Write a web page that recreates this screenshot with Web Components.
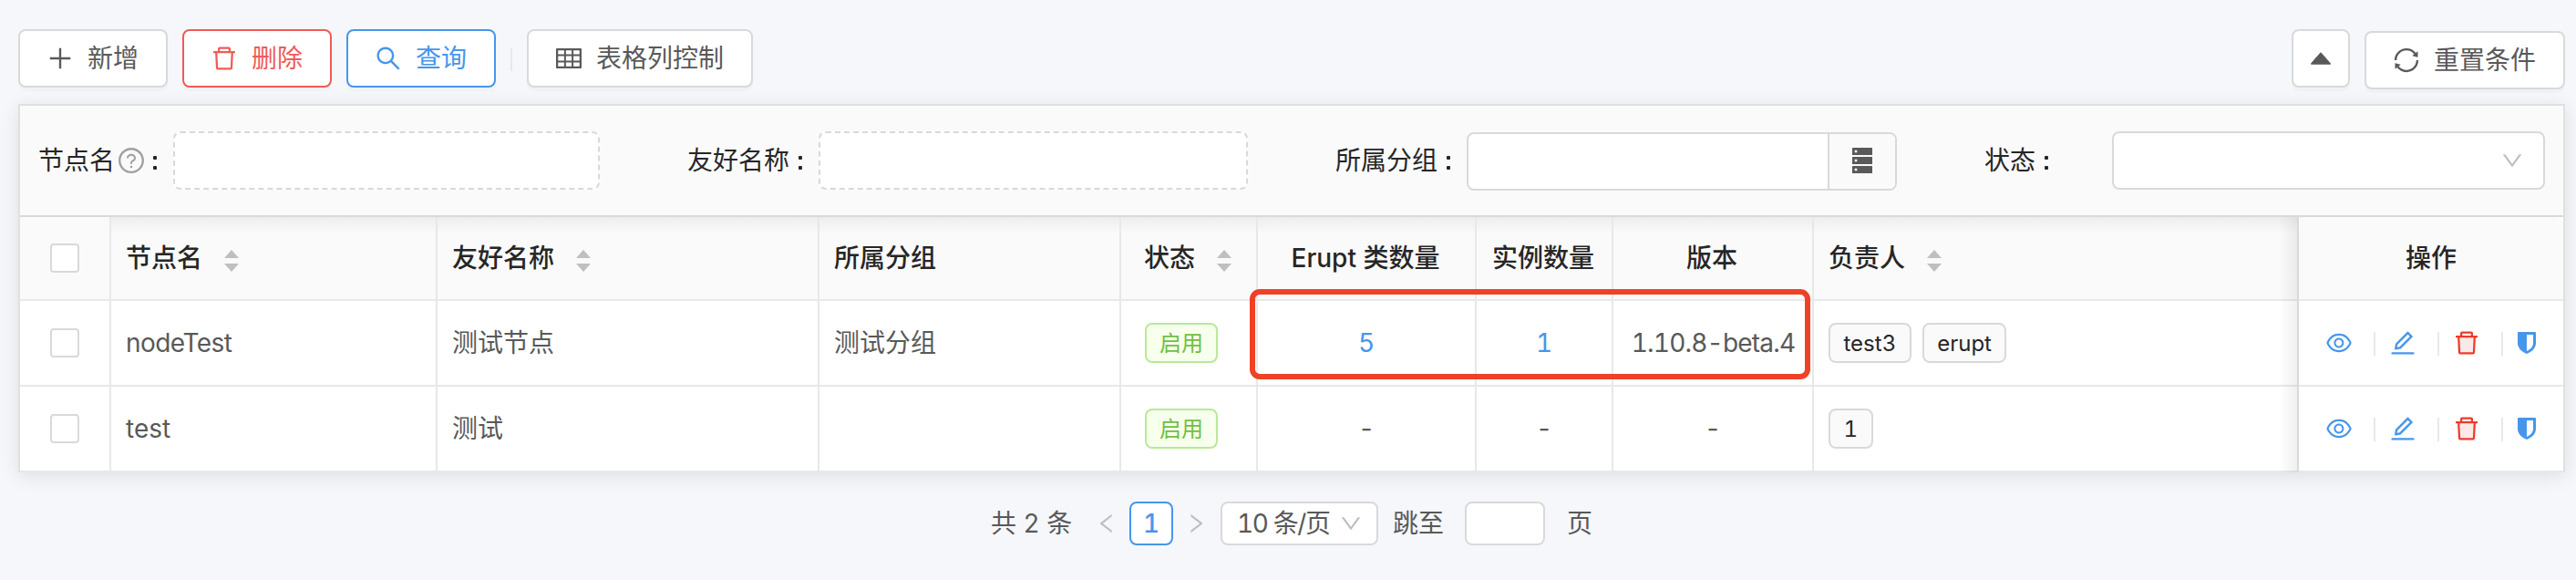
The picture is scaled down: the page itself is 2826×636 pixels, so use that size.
<!DOCTYPE html>
<html lang="zh-CN">
<head>
<meta charset="utf-8">
<title>Erupt 节点管理</title>
<style>
  html, body { margin: 0; height: 100%; }
  body {
    background: #f5f7fb;
    color: #595959;
    font: 28px/44px Inter, "Noto Sans CJK SC", sans-serif;
    font-variant-numeric: tabular-nums;
    overflow: hidden;
  }
</style>
</head>
<body>
<node-page></node-page>
<script>
const ICONS = {
  plus: '<path d="M482 152h60q8 0 8 8v704q0 8-8 8h-60q-8 0-8-8V160q0-8 8-8Z"/><path d="M192 474h672q8 0 8 8v60q0 8-8 8H160q-8 0-8-8v-60q0-8 8-8Z"/>',
  trash: '<path d="M360 184h-8c4.400 0 8-3.600 8-8v8h304v-8c0 4.400 3.600 8 8 8h-8v72h72v-80c0-35.300-28.700-64-64-64H352c-35.300 0-64 28.700-64 64v80h72v-72zm504 72H160c-17.700 0-32 14.300-32 32v32c0 4.400 3.600 8 8 8h60.400l24.700 523c1.600 34.100 29.800 61 63.900 61h454c34.200 0 62.300-26.800 63.900-61l24.700-523H888c4.400 0 8-3.600 8-8v-32c0-17.700-14.300-32-32-32zM731.300 840H292.700l-24.200-512h487l-24.200 512z"/>',
  trash2: '<path fill="#fbe9e7" d="M292.700 840h438.600l24.200-512h-487z"/><path d="M864 256H736v-80c0-35.300-28.700-64-64-64H352c-35.300 0-64 28.700-64 64v80H160c-17.700 0-32 14.300-32 32v32c0 4.400 3.600 8 8 8h60.400l24.700 523c1.600 34.100 29.800 61 63.900 61h454c34.200 0 62.300-26.800 63.900-61l24.700-523H888c4.400 0 8-3.600 8-8v-32c0-17.700-14.300-32-32-32zm-504-72h304v72H360v-72zm371.300 656H292.700l-24.200-512h487l-24.200 512z"/>',
  search: '<path d="M909.600 854.500L649.900 594.800C690.200 542.700 712 479 712 412c0-80.200-31.300-155.400-87.900-212.100-56.600-56.700-132-87.900-212.100-87.900s-155.500 31.300-212.100 87.900C143.200 256.500 112 331.800 112 412c0 80.100 31.300 155.500 87.900 212.100C256.500 680.800 331.800 712 412 712c67 0 130.600-21.800 182.700-62l259.700 259.600a8.200 8.200 0 0 0 11.600 0l43.600-43.500a8.200 8.200 0 0 0 0-11.600zM570.400 570.400C528 612.700 471.800 636 412 636s-116-23.300-158.400-65.600C211.300 528 188 471.800 188 412s23.300-116.100 65.600-158.400C296 211.300 352.200 188 412 188s116.100 23.200 158.400 65.600S636 352.200 636 412s-23.300 116.100-65.600 158.400z"/>',
  table: '<path d="M928 160H96c-17.700 0-32 14.300-32 32v640c0 17.700 14.300 32 32 32h832c17.700 0 32-14.300 32-32V192c0-17.700-14.300-32-32-32zm-40 208H676V232h212v136zm0 224H676V432h212v160zM412 432h200v160H412V432zm200-64H412V232h200v136zm-476 64h212v160H136V432zm0-200h212v136H136V232zm0 424h212v136H136V656zm276 0h200v136H412V656zm476 136H676V656h212v136z"/>',
  caretUp: '<path d="M858.900 689L530.500 308.200c-9.400-10.900-27.500-10.900-37 0L165.100 689c-12.200 14.200-1.200 35 18.500 35h656.800c19.700 0 30.700-20.800 18.500-35z"/>',
  sync: '<path d="M168 504.200c1-43.700 10-86.100 26.900-126 17.300-41 42.100-77.700 73.700-109.400S337 212.300 378 195c42.400-17.900 87.400-27 133.900-27s91.500 9.100 133.800 27A341.500 341.500 0 0 1 755 268.800c9.900 9.900 19.200 20.400 27.800 31.400l-60.200 47a8 8 0 0 0 3 14.100l175.700 43c5 1.200 9.900-2.600 9.900-7.700l.8-180.900c0-6.700-7.700-10.500-12.900-6.300l-56.400 44.100C765.800 155.100 646.200 92 511.800 92 282.700 92 96.300 275.600 92 503.800a8 8 0 0 0 8 8.200h60c4.400 0 7.900-3.500 8-7.800zm756 7.800h-60c-4.400 0-7.900 3.500-8 7.800-1 43.700-10 86.100-26.900 126-17.300 41-42.100 77.800-73.700 109.400A342.450 342.450 0 0 1 512.100 856a342.240 342.240 0 0 1-243.200-100.800c-9.900-9.900-19.200-20.400-27.800-31.400l60.200-47a8 8 0 0 0-3-14.100l-175.700-43c-5-1.200-9.900 2.600-9.900 7.700l-.7 181c0 6.700 7.700 10.500 12.900 6.300l56.400-44.100C258.200 868.900 377.800 932 512.200 932c229.200 0 415.500-183.700 419.800-411.800a8 8 0 0 0-8-8.200z"/>',
  help: '<path d="M512 64C264.600 64 64 264.600 64 512s200.600 448 448 448 448-200.600 448-448S759.400 64 512 64zm0 820c-205.400 0-372-166.600-372-372s166.600-372 372-372 372 166.600 372 372-166.600 372-372 372z"/><path d="M623.600 316.700C593.600 290.400 554 276 512 276s-81.600 14.500-111.600 40.700C369.200 344 352 380.700 352 420v7.600c0 4.400 3.600 8 8 8h48c4.400 0 8-3.600 8-8V420c0-44.100 43.100-80 96-80s96 35.900 96 80c0 31.100-22 59.600-56.100 72.700-21.200 8.100-39.200 22.300-52.100 40.900-13.100 19-19.900 41.800-19.900 64.900V620c0 4.400 3.600 8 8 8h48c4.400 0 8-3.600 8-8v-22.700a48.300 48.300 0 0 1 30.900-44.800c59-22.700 97.100-74.700 97.100-132.500.1-39.300-17.100-76-48.300-103.300zM472 732a40 40 0 1 0 80 0 40 40 0 1 0-80 0z"/>',
  down: '<path d="M884 256h-75c-5.100 0-9.900 2.500-12.900 6.600L512 654.200 227.900 262.600c-3-4.100-7.800-6.600-12.900-6.600h-75c-6.500 0-10.300 7.400-6.500 12.700l352.600 486.100c12.800 17.600 39 17.600 51.700 0l352.600-486.100c3.900-5.300.1-12.700-6.400-12.700z"/>',
  left: '<path d="M724 218.300V141c0-6.700-7.700-10.400-12.900-6.300L260.300 486.800a31.860 31.860 0 0 0 0 50.300l450.800 352.100c5.300 4.100 12.900.4 12.900-6.300v-77.300c0-4.900-2.300-9.600-6.100-12.600l-360-281 360-281.100c3.800-3 6.100-7.700 6.100-12.600z"/>',
  right: '<path d="M765.700 486.800L314.900 134.700A7.970 7.970 0 0 0 302 141v77.300c0 4.900 2.300 9.600 6.100 12.600l360 281.100-360 281.100c-3.900 3-6.100 7.700-6.100 12.600V883c0 6.700 7.700 10.400 12.900 6.300l450.800-352.100a31.960 31.960 0 0 0 0-50.400z"/>',
  eye: '<path d="M942.200 486.200C847.400 286.500 704.100 186 512 186c-192.200 0-335.400 100.500-430.200 300.300a60.300 60.300 0 0 0 0 51.500C176.600 737.500 319.900 838 512 838c192.200 0 335.400-100.500 430.200-300.300 7.700-16.200 7.700-35 0-51.500zM512 766c-161.300 0-279.400-81.800-362.700-254C232.600 339.800 350.700 258 512 258c161.300 0 279.400 81.800 362.700 254C791.500 684.200 673.400 766 512 766zm-4-430c-97.200 0-176 78.800-176 176s78.800 176 176 176 176-78.800 176-176-78.800-176-176-176zm0 288c-61.900 0-112-50.100-112-112s50.100-112 112-112 112 50.100 112 112-50.100 112-112 112z"/>',
  edit: '<path d="M257.700 752c2 0 4-.2 6-.5L431.900 722c2-.4 3.900-1.300 5.300-2.800l423.900-423.900a9.960 9.960 0 0 0 0-14.100L694.900 114.900c-1.900-1.900-4.400-2.900-7.100-2.900s-5.200 1-7.100 2.900L256.800 538.800c-1.500 1.500-2.400 3.300-2.800 5.300l-29.500 168.200a33.500 33.500 0 0 0 9.400 29.800c6.600 6.400 14.900 9.900 23.800 9.900zm67.400-174.400L687.800 215l73.300 73.300-362.700 362.600-88.900 15.700 15.600-89zM880 836H144c-17.700 0-32 14.300-32 32v36c0 4.400 3.600 8 8 8h784c4.400 0 8-3.600 8-8v-36c0-17.700-14.300-32-32-32z"/>'
};

// Registers an element whose shadow root is cloned from a template.
function define(name, render) {
  customElements.define(name, class extends HTMLElement {
    connectedCallback() {
      if (this.shadowRoot) return;
      const t = document.createElement('template');
      t.innerHTML = typeof render === 'function' ? render(this) : render;
      this.attachShadow({ mode: 'open' }).append(t.content.cloneNode(true));
    }
  });
}

define('ui-icon', el => `
  <style>
    :host { display: block; flex: none; width: var(--size, 28px); height: var(--size, 28px); }
    svg { display: block; width: 100%; height: 100%; fill: currentColor; }
  </style>
  <svg viewBox="64 64 896 896">${ICONS[el.getAttribute('name')]}</svg>`);

define('shield-icon', `
  <style>:host { display: block; width: 20px; height: 24px; } svg { display: block; }</style>
  <svg width="20" height="24" viewBox="0 0 20 24"><path fill="currentColor" fill-rule="evenodd" d="M1 0h18q1 0 1 1v11c0 6-4.500 9.800-10 12C4.500 21.800 0 18 0 12V1q0-1 1-1Zm9 3v18c4-2 7-4.800 7-9V3Z"/></svg>`);

define('server-icon', `
  <style>:host { display: block; width: 22px; height: 28px; } svg { display: block; }</style>
  <svg width="22" height="28" viewBox="0 0 22 28"><path fill="#595959" fill-rule="evenodd" d="M.5 0h21q.5 0 .5.500v7q0 .5-.5.500H.5Q0 8 0 7.500v-7Q0 0 .5 0ZM2.700 2.700v2.600h2.600V2.700ZM.5 10h21q.5 0 .5.500v7q0 .5-.5.500H.5q-.5 0-.5-.5v-7q0-.5.500-.5Zm2.200 2.700v2.600h2.600v-2.600ZM.5 20h21q.5 0 .5.500v7q0 .5-.5.500H.5q-.5 0-.5-.5v-7q0-.5.500-.5Zm2.200 2.700v2.600h2.600v-2.600Z"/></svg>`);

define('ui-button', el => `
  <style>
    :host { display: flex; box-sizing: border-box; height: 64px; padding: 0 30px; gap: 16px;
      align-items: center; justify-content: center; border: 2px solid #d9d9d9; border-radius: 8px;
      background: #fff; box-shadow: 0 4px 0 rgba(0,0,0,.02); white-space: nowrap; }
    :host([danger]) { border-color: #f05b56; color: #f05b56; }
    :host([primary]) { border-color: #4696ec; color: #4696ec; }
    :host([wide]) { margin-top: 2px; }
    :host([square]) { width: 64px; padding: 0; margin-right: 16px; }
  </style>
  <ui-icon name="${el.getAttribute('icon')}"></ui-icon><slot></slot>`);

define('tool-bar', `
  <style>
    :host { display: flex; height: 82px; padding: 32px 12px 0 20px; align-items: flex-start; }
    .left { display: flex; gap: 16px; flex: 1; }
    .right { display: flex; }
    .square { gap: 0; }
    i { width: 2px; height: 26px; background: #e8e8e8; margin-top: 20px; }
  </style>
  <div class="left">
    <ui-button icon="plus">新增</ui-button>
    <ui-button icon="trash" danger>删除</ui-button>
    <ui-button icon="search" primary>查询</ui-button>
    <i></i>
    <ui-button icon="table">表格列控制</ui-button>
  </div>
  <div class="right">
    <ui-button icon="caretUp" square></ui-button>
    <ui-button icon="sync" wide>重置条件</ui-button>
  </div>`);

define('form-label', `
  <style>
    :host { display: flex; align-items: center; color: #262626; height: 64px; white-space: nowrap; }
    .c { display: flex; flex-direction: column; gap: 7px; margin-left: 9.5px; padding-top: 4px; }
    .c::before, .c::after { content: ""; width: 4px; height: 4px; border-radius: 1px; background: #262626; }
  </style>
  <slot></slot><span class="c"></span>`);

define('search-form', `
  <style>
    :host { display: grid; box-sizing: border-box; height: 122px; padding: 28px 20px 0 20px;
      grid-template-columns: 148px 468px 96px 144px 471px 96px 144px 472px 96px 140px 475px;
      border-bottom: 2px solid #d9d9d9; background: #fafafa; position: relative; z-index: 1; }
    .box { box-sizing: border-box; height: 64px; border: 2px solid #d9d9d9; border-radius: 8px; background: #fff; }
    .dash { border-style: dashed; }
    .group { display: flex; margin-top: 1px; overflow: hidden; }
    .group b { margin-left: auto; width: 72px; border-left: 2px solid #d9d9d9; background: #fafafa;
      display: flex; align-items: center; justify-content: center; }
    .group server-icon { margin-top: -2px; }
    .select { display: flex; align-items: center; justify-content: flex-end; padding-right: 22px; color: #bfbfbf; --size: 24px; }
    .q { color: #a0a0a0; margin-left: 4px; }
  </style>
  <form-label>节点名<ui-icon class="q" name="help"></ui-icon></form-label>
  <div class="box dash"></div><span></span>
  <form-label>友好名称</form-label>
  <div class="box dash"></div><span></span>
  <form-label>所属分组</form-label>
  <div class="box group"><b><server-icon></server-icon></b></div><span></span>
  <form-label>状态</form-label>
  <div class="box select"><ui-icon name="down"></ui-icon></div>`);

define('sort-arrows', `
  <style>:host { display: block; } svg { display: block; }</style>
  <svg width="16" height="24" viewBox="0 0 16 24" fill="#bfbfbf"><path d="M8 0l8 9H0ZM8 24l8-9H0Z"/></svg>`);

define('check-box', `
  <style>:host { display: block; box-sizing: border-box; width: 32px; height: 32px; border: 2px solid #d9d9d9; border-radius: 4px; background: #fff; }</style>`);

define('ui-tag', `
  <style>
    :host { display: block; box-sizing: border-box; height: 44px; padding: 0 14.5px; margin-right: 12px; border: 2px solid #d9d9d9;
      border-radius: 8px; background: #fafafa; color: #262626; font-size: 24px; line-height: 41px; }
    :host([success]) { padding: 0 14px; border-color: #bbe897; background: #f7ffed; color: #6fc040; margin-right: 16px; }
  </style><slot></slot>`);

define('table-cell', `
  <style>
    :host { display: flex; box-sizing: border-box; align-items: center; height: 100%; padding: 0 16px;
      border-right: 2px solid #e8e8e8; white-space: nowrap; background: #fff; }
    :host([center]) { justify-content: center; }
    :host([link]) { color: #4696ec; }
    :host([latin]) { letter-spacing: -.55px; }
    :host([version]) { letter-spacing: -.8px; padding-right: 15px; }
    :host([head]) { background: linear-gradient(#ededed, #fafafa 18px); color: #262626; font-weight: 500; }
    :host([head][center]) { padding-right: 18px; }
    :host([head][plain]) { background: #fafafa; padding-right: 16px; }
    :host([last]) { border-right: 0; }
    ::slotted(sort-arrows) { margin-left: 24px; margin-top: 5px; }
  </style><slot></slot>`);

define('row-actions', `
  <style>
    :host { display: flex; align-items: center; height: 28px; color: #4696ec; }
    i { width: 2px; height: 26px; background: #e8e8e8; margin: 2px 16px 0 24px; }
    .d { color: #ee3a28; }
  </style>
  <ui-icon name="eye"></ui-icon><i></i>
  <ui-icon name="edit"></ui-icon><i></i>
  <ui-icon class="d" name="trash2"></ui-icon><i></i>
  <shield-icon></shield-icon>`);

define('node-table', `
  <style>
    :host { display: block; position: relative; }
    .row { display: grid; grid-template-columns: 100px 358px 419px 331px 150px 240px 150px 220px 532px 290px;
      border-bottom: 2px solid #e8e8e8; height: 92px; }
    .row.h { height: 90px; }
    .fixed { position: relative; border-right: 0; }
    .fixed::before { content: ""; position: absolute; right: 100%; top: 0; bottom: -2px; width: 20px;
      border-right: 2px solid #d9d9d9; background: linear-gradient(to left, rgba(0,0,0,.06), transparent); }
    .h .fixed { border-top-right-radius: 8px; }
    .mark { position: absolute; left: 1349px; top: 79px; width: 603px; height: 87px; border: 6px solid #ef4127; border-radius: 11px; }
  </style>
  <div class="row h">
    <table-cell head plain center><check-box></check-box></table-cell>
    <table-cell head>节点名<sort-arrows></sort-arrows></table-cell>
    <table-cell head>友好名称<sort-arrows></sort-arrows></table-cell>
    <table-cell head>所属分组</table-cell>
    <table-cell head center>状态<sort-arrows></sort-arrows></table-cell>
    <table-cell head center>Erupt 类数量</table-cell>
    <table-cell head center>实例数量</table-cell>
    <table-cell head center>版本</table-cell>
    <table-cell head last>负责人<sort-arrows></sort-arrows></table-cell>
    <table-cell head plain center last class="fixed">操作</table-cell>
  </div>
  <div class="row">
    <table-cell center><check-box></check-box></table-cell>
    <table-cell latin>nodeTest</table-cell>
    <table-cell>测试节点</table-cell>
    <table-cell>测试分组</table-cell>
    <table-cell center><ui-tag success>启用</ui-tag></table-cell>
    <table-cell center link>5</table-cell>
    <table-cell center link>1</table-cell>
    <table-cell center version>1.10.8-beta.4</table-cell>
    <table-cell last><ui-tag>test3</ui-tag><ui-tag>erupt</ui-tag></table-cell>
    <table-cell center last class="fixed"><row-actions></row-actions></table-cell>
  </div>
  <div class="row">
    <table-cell center><check-box></check-box></table-cell>
    <table-cell>test</table-cell>
    <table-cell>测试</table-cell>
    <table-cell></table-cell>
    <table-cell center><ui-tag success>启用</ui-tag></table-cell>
    <table-cell center>-</table-cell>
    <table-cell center>-</table-cell>
    <table-cell center>-</table-cell>
    <table-cell last><ui-tag>1</ui-tag></table-cell>
    <table-cell center last class="fixed"><row-actions></row-actions></table-cell>
  </div>
  <div class="mark"></div>`);

define('page-bar', `
  <style>
    :host { display: flex; height: 48px; margin: 32px 0 0 1087px; align-items: center; white-space: nowrap; }
    .box { box-sizing: border-box; height: 48px; border: 2px solid #d9d9d9; border-radius: 8px; background: #fff; display: flex; align-items: center; }
    .total { width: 115px; }
    ui-icon { color: #bfbfbf; --size: 24px; }
    .cur { width: 48px; margin: 0 13px; border-color: #4696ec; color: #4696ec; font-weight: 500; justify-content: center; }
    .size { width: 173px; margin-left: 15px; padding: 0 16px; justify-content: space-between; letter-spacing: -1.4px; }
    .jump { margin-left: 16px; width: 79px; }
    .in { width: 88px; margin-right: 24px; }
  </style>
  <span class="total">共 2 条</span>
  <ui-icon name="left"></ui-icon>
  <span class="box cur">1</span>
  <ui-icon name="right"></ui-icon>
  <span class="box size">10 条/页<ui-icon name="down"></ui-icon></span>
  <span class="jump">跳至</span><span class="box in"></span><span>页</span>`);

define('node-page', `
  <style>
    :host { display: block; width: 2826px; height: 636px; }
    .card { margin: 0 12px 0 20px; border: 2px solid #e0e0e0; border-bottom: 0; background: #fff;
      box-shadow: 0 4px 20px rgba(0,0,0,.1); }
    page-bar, .card { line-height: 45px; }
    tool-bar { line-height: 45px; }
  </style>
  <tool-bar></tool-bar>
  <div class="card"><search-form></search-form><node-table></node-table></div>
  <page-bar></page-bar>`);
</script>
</body>
</html>
